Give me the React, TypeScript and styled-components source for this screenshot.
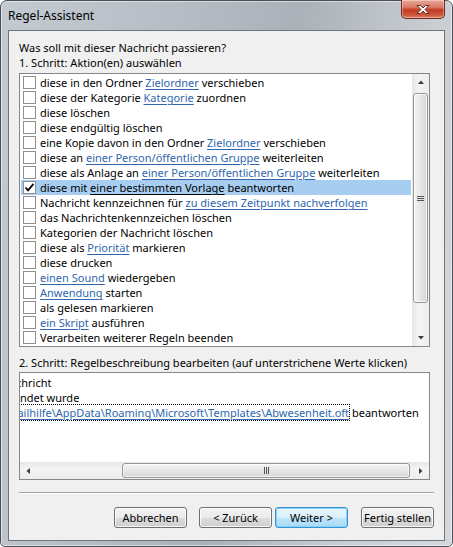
import React, { useLayoutEffect, useRef, useState } from "react";
import styled, { createGlobalStyle, css } from "styled-components";

const GlobalStyle = createGlobalStyle`
  html, body {
    margin: 0;
    padding: 0;
    background: #ffffff;
    overflow: hidden;
  }
  body {
    font-family: "Noto Sans", "Liberation Sans", sans-serif;
    font-size: 11px;
    color: #000;
  }
`;

const Window = styled.div`
  width: 453px;
  height: 547px;
  box-sizing: border-box;
  border: 1px solid #4b5056;
  border-radius: 7px 7px 5px 5px;
  background: linear-gradient(100deg, #c3cad1 0%, #b7bec5 30%, #aab1b8 55%, #c9ced3 80%, #d5d9dd 100%);
  box-shadow: inset 0 0 0 1px rgba(255, 255, 255, 0.5);
  display: flex;
  flex-direction: column;
  padding: 0 7px 5px;
`;

const TitleBar = styled.div`
  height: 29px;
  display: flex;
  justify-content: space-between;
  align-items: flex-start;
`;

const Title = styled.div`
  padding-top: 7px;
  line-height: 15px;
  font-size: 12px;
`;

const CloseButton = styled.div`
  width: 44px;
  height: 19px;
  margin-top: -1px;
  box-sizing: border-box;
  border: 1px solid #6e2a22;
  border-top: none;
  border-radius: 0 0 5px 5px;
  background: linear-gradient(#e8a898 0%, #d97966 40%, #c43a22 55%, #cf5a3f 85%, #e0826a 100%);
  box-shadow: inset 0 0 0 1px rgba(255, 255, 255, 0.35);
  display: flex;
  align-items: center;
  justify-content: center;
`;

const Client = styled.div`
  flex: 1;
  background: #f0f0f0;
  border: 1px solid #6f757b;
  padding: 9px 10px 11px;
  display: flex;
  flex-direction: column;
`;

const Label = styled.div<{ $gap?: number }>`
  line-height: 15px;
  height: 15px;
  white-space: nowrap;
  margin-top: ${(p) => p.$gap ?? 0}px;
`;

const Box = styled.div<{ $height: number; $gap: number }>`
  box-sizing: border-box;
  height: ${(p) => p.$height}px;
  margin-top: ${(p) => p.$gap}px;
  margin-right: 4px;
  border: 1px solid #828790;
  background: #fff;
  display: flex;
  overflow: hidden;
`;

const ListRows = styled.div`
  flex: 1;
  padding: 1px 1px 0;
  overflow: hidden;
`;

const Row = styled.div<{ $selected?: boolean }>`
  height: 15px;
  display: flex;
  align-items: center;
  white-space: nowrap;
  background: ${(p) => (p.$selected ? "#a7cdf0" : "transparent")};
`;

const Check = styled.div`
  width: 13px;
  height: 13px;
  box-sizing: border-box;
  border: 1px solid #8f8f8f;
  background: #fff;
  margin: 0 4px 0 2px;
  display: flex;
  align-items: center;
  justify-content: center;
  flex: none;
`;

const RowText = styled.span`
  line-height: 15px;
`;

const Link = styled.span<{ $plain?: boolean; $focus?: boolean }>`
  color: ${(p) => (p.$plain ? "#000" : "#2f66ad")};
  text-decoration: underline;
  text-underline-offset: 2px;
  ${(p) =>
    p.$focus &&
    css`
      outline: 1px dotted #000;
      outline-offset: 0;
    `}
`;

/* scrollbars */

const VScroll = styled.div`
  width: 17px;
  flex: none;
  display: flex;
  flex-direction: column;
  background: linear-gradient(90deg, #e6e6e6, #f4f4f4 40%, #ededed);
`;

const HScroll = styled.div`
  height: 17px;
  flex: none;
  display: flex;
  background: linear-gradient(#e6e6e6, #f4f4f4 40%, #ededed);
`;

const ArrowButton = styled.div`
  width: 17px;
  height: 17px;
  flex: none;
  display: flex;
  align-items: center;
  justify-content: center;
`;

const VTrack = styled.div`
  flex: 1;
  display: flex;
  flex-direction: column;
  padding: 2px 0 26px;
`;

const HTrack = styled.div`
  flex: 1;
  display: flex;
  padding: 0 2px 0 85px;
`;

const Thumb = styled.div<{ $vertical?: boolean }>`
  flex: 1;
  box-sizing: border-box;
  border: 1px solid #979797;
  border-radius: 3px;
  margin: ${(p) => (p.$vertical ? "0 1px" : "1px 0")};
  background: ${(p) =>
    p.$vertical
      ? "linear-gradient(90deg, #f4f4f4, #e6e6e6 50%, #d6d6d6)"
      : "linear-gradient(#f4f4f4, #e6e6e6 50%, #d6d6d6)"};
  box-shadow: inset 0 0 0 1px rgba(255, 255, 255, 0.7);
  display: flex;
  align-items: center;
  justify-content: center;
`;

const DescArea = styled.div`
  flex: 1;
  display: flex;
  flex-direction: column;
  min-width: 0;
`;

const DescText = styled.div`
  flex: 1;
  padding-top: 2px;
  overflow: hidden;
`;

const DescLine = styled.div<{ $shift?: number }>`
  line-height: 15px;
  height: 15px;
  white-space: nowrap;
  margin-left: ${(p) => -(p.$shift ?? 0)}px;
`;

const Separator = styled.div`
  height: 0;
  margin-top: 12px;
  border-top: 1px solid #a0a0a0;
  border-bottom: 1px solid #ffffff;
`;

const Buttons = styled.div`
  margin-top: 13px;
  display: flex;
  justify-content: flex-end;
`;

const Button = styled.div<{ $gap?: number; $default?: boolean }>`
  width: 73px;
  height: 21px;
  box-sizing: border-box;
  margin-left: ${(p) => p.$gap ?? 0}px;
  border: 1px solid ${(p) => (p.$default ? "#3c8fd0" : "#707070")};
  border-radius: 3px;
  background: ${(p) =>
    p.$default
      ? "linear-gradient(#eaf6fd 0%, #d9f0fc 50%, #bee6fd 51%, #a7d9f5 100%)"
      : "linear-gradient(#f2f2f2 0%, #ebebeb 50%, #dddddd 51%, #cfcfcf 100%)"};
  box-shadow: inset 0 0 0 1px ${(p) => (p.$default ? "rgba(120,210,250,0.9)" : "rgba(255,255,255,0.8)")};
  display: flex;
  align-items: center;
  justify-content: center;
  white-space: nowrap;
  line-height: 15px;
`;

type Part = string | { link: string };

const actions: { parts: Part[]; checked?: boolean }[] = [
  { parts: ["diese in den Ordner ", { link: "Zielordner" }, " verschieben"] },
  { parts: ["diese der Kategorie ", { link: "Kategorie" }, " zuordnen"] },
  { parts: ["diese löschen"] },
  { parts: ["diese endgültig löschen"] },
  { parts: ["eine Kopie davon in den Ordner ", { link: "Zielordner" }, " verschieben"] },
  { parts: ["diese an ", { link: "einer Person/öffentlichen Gruppe" }, " weiterleiten"] },
  { parts: ["diese als Anlage an ", { link: "einer Person/öffentlichen Gruppe" }, " weiterleiten"] },
  { parts: ["diese mit ", { link: "einer bestimmten Vorlage" }, " beantworten"], checked: true },
  { parts: ["Nachricht kennzeichnen für ", { link: "zu diesem Zeitpunkt nachverfolgen" }] },
  { parts: ["das Nachrichtenkennzeichen löschen"] },
  { parts: ["Kategorien der Nachricht löschen"] },
  { parts: ["diese als ", { link: "Priorität" }, " markieren"] },
  { parts: ["diese drucken"] },
  { parts: [{ link: "einen Sound" }, " wiedergeben"] },
  { parts: [{ link: "Anwendung" }, " starten"] },
  { parts: ["als gelesen markieren"] },
  { parts: [{ link: "ein Skript" }, " ausführen"] },
  { parts: ["Verarbeiten weiterer Regeln beenden"] },
];

// where the template link ends inside the scrolled description box
const LINK_RIGHT = 329;

function CloseGlyph() {
  return (
    <svg width="14" height="11" viewBox="0 0 14 11">
      <path
        d="M1 1.5h3.5L7 4l2.5-2.5H13L9 5.5l4 4H9.5L7 7l-2.5 2.5H1l4-4z"
        fill="#fff"
        stroke="#5a2018"
        strokeWidth="0.9"
        strokeLinejoin="round"
      />
    </svg>
  );
}

function CheckGlyph() {
  return (
    <svg width="11" height="11" viewBox="0 0 11 11">
      <path d="M1.5 5.5 L4 8.3 L9.5 1.8" fill="none" stroke="#000" strokeWidth="1.8" />
    </svg>
  );
}

function Arrow({ dir }: { dir: "up" | "down" | "left" | "right" }) {
  const pts = {
    up: "1,5 4,1.5 7,5",
    down: "1,2 4,5.5 7,2",
    left: "5,1 1.5,4 5,7",
    right: "2,1 5.5,4 2,7",
  }[dir];
  return (
    <svg width="8" height="8" viewBox="0 0 8 8">
      <polygon points={pts} fill="#3c3c3c" />
    </svg>
  );
}

function Grip({ vertical }: { vertical?: boolean }) {
  return vertical ? (
    <svg width="7" height="7" viewBox="0 0 7 7">
      <path d="M0 1.5h7M0 3.5h7M0 5.5h7" stroke="#555" strokeWidth="1" />
    </svg>
  ) : (
    <svg width="7" height="7" viewBox="0 0 7 7">
      <path d="M1.5 0v7M3.5 0v7M5.5 0v7" stroke="#555" strokeWidth="1" />
    </svg>
  );
}

export default function App() {
  const linkRef = useRef<HTMLSpanElement>(null);
  const [linkShift, setLinkShift] = useState(0);

  useLayoutEffect(() => {
    if (linkRef.current) {
      setLinkShift(Math.max(0, linkRef.current.offsetWidth - LINK_RIGHT));
    }
  }, []);

  return (
    <>
      <GlobalStyle />
      <Window>
        <TitleBar>
          <Title>Regel-Assistent</Title>
          <CloseButton>
            <CloseGlyph />
          </CloseButton>
        </TitleBar>
        <Client>
          <Label>Was soll mit dieser Nachricht passieren?</Label>
          <Label>1. Schritt: Aktion(en) auswählen</Label>

          <Box $height={274} $gap={3}>
            <ListRows>
              {actions.map((a, i) => (
                <Row key={i} $selected={a.checked}>
                  <Check>{a.checked ? <CheckGlyph /> : null}</Check>
                  <RowText>
                    {a.parts.map((p, j) =>
                      typeof p === "string" ? (
                        <span key={j}>{p}</span>
                      ) : (
                        <Link key={j} $plain={a.checked}>
                          {p.link}
                        </Link>
                      )
                    )}
                  </RowText>
                </Row>
              ))}
            </ListRows>
            <VScroll>
              <ArrowButton>
                <Arrow dir="up" />
              </ArrowButton>
              <VTrack>
                <Thumb $vertical>
                  <Grip vertical />
                </Thumb>
              </VTrack>
              <ArrowButton>
                <Arrow dir="down" />
              </ArrowButton>
            </VScroll>
          </Box>

          <Label $gap={8}>2. Schritt: Regelbeschreibung bearbeiten (auf unterstrichene Werte klicken)</Label>

          <Box $height={108} $gap={2}>
            <DescArea>
              <DescText>
                <DescLine $shift={4}>chricht</DescLine>
                <DescLine>ndet wurde</DescLine>
                <DescLine style={{ marginLeft: -linkShift }}>
                  <Link ref={linkRef} $focus>
                    Users\Mailhilfe\AppData\Roaming\Microsoft\Templates\Abwesenheit.oft
                  </Link>{" "}
                  beantworten
                </DescLine>
              </DescText>
              <HScroll>
                <ArrowButton>
                  <Arrow dir="left" />
                </ArrowButton>
                <HTrack>
                  <Thumb>
                    <Grip />
                  </Thumb>
                </HTrack>
                <ArrowButton>
                  <Arrow dir="right" />
                </ArrowButton>
              </HScroll>
            </DescArea>
          </Box>

          <Separator />

          <Buttons>
            <Button>Abbrechen</Button>
            <Button $gap={12}>&lt; Zurück</Button>
            <Button $gap={3} $default>
              Weiter &gt;
            </Button>
            <Button $gap={13}>Fertig stellen</Button>
          </Buttons>
        </Client>
      </Window>
    </>
  );
}
